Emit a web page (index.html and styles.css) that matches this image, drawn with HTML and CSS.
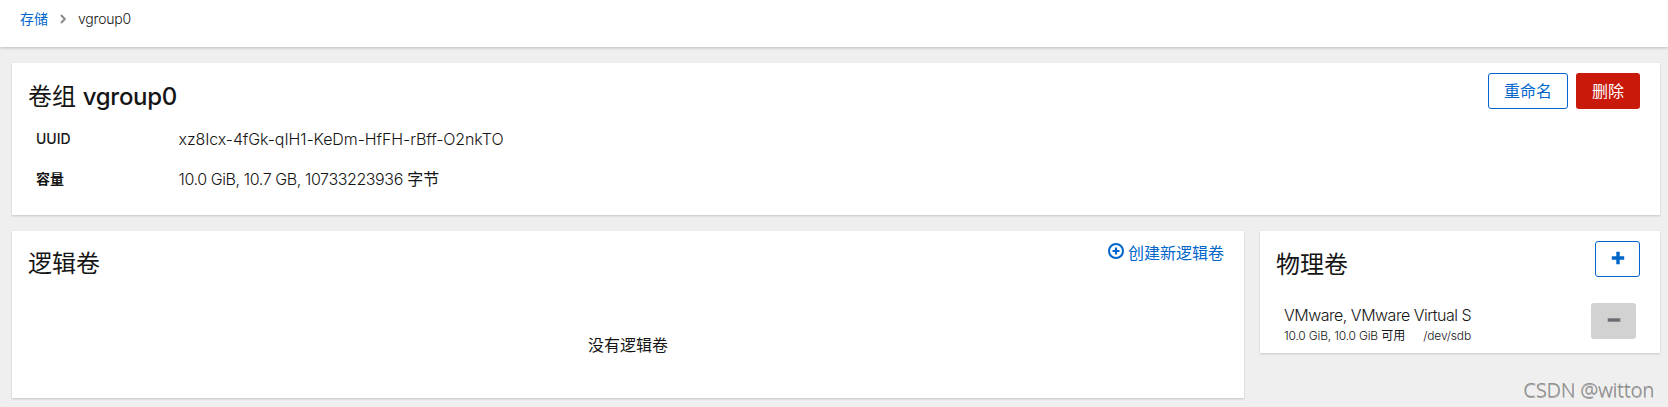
FILE: index.html
```html
<!DOCTYPE html>
<html lang="zh-CN">
<head>
<meta charset="utf-8">
<title>vgroup0</title>
<link rel="stylesheet" href="styles.css">
</head>
<body>
<nav class="breadcrumb">
  <a class="crumb-link">存储</a>
  <svg class="chevron" width="6" height="10" viewBox="0 0 6 10"><path d="M1 1l3.8 4L1 9" fill="none" stroke="#8a8d90" stroke-width="2"/></svg>
  <span class="latin crumb-current">vgroup0</span>
</nav>
<main class="page">
  <section class="card group">
    <header class="card-head">
      <h2 class="title">卷组 <span class="title-name">vgroup0</span></h2>
      <div class="actions"><button class="btn secondary rename">重命名</button><button class="btn danger">删除</button></div>
    </header>
    <dl class="details">
      <dt class="uuid-label">UUID</dt><dd><span class="latin uuid">xz8Icx-4fGk-qIH1-KeDm-HfFH-rBff-O2nkTO</span></dd>
      <dt>容量</dt><dd><span class="latin capacity">10.0 GiB, 10.7 GB, 10733223936</span> 字节</dd>
    </dl>
  </section>
  <div class="columns">
    <section class="card logical">
      <header class="card-head">
        <h2 class="title">逻辑卷</h2>
        <a class="create"><svg width="16" height="16" viewBox="0 0 16 16"><circle cx="8" cy="8" r="7" fill="none" stroke="#06c" stroke-width="2"/><path d="M8 4.5v7M4.5 8h7" stroke="#06c" stroke-width="2.2"/></svg><span>创建新逻辑卷</span></a>
      </header>
      <p class="empty">没有逻辑卷</p>
    </section>
    <section class="card physical">
      <header class="card-head">
        <h2 class="title">物理卷</h2>
        <button class="btn secondary icon"><svg width="14" height="14" viewBox="0 0 14 14"><path d="M7 .8v12.4M.8 7h12.4" stroke="#06c" stroke-width="3.4"/></svg></button>
      </header>
      <div class="volume">
        <div class="volume-text">
          <div class="volume-name"><span class="latin vm">VMware, VMware Virtual S</span></div>
          <div class="volume-meta"><span><span class="latin size">10.0 GiB, 10.0 GiB</span> 可用</span><span class="latin dev">/dev/sdb</span></div>
        </div>
        <button class="btn disabled icon"><svg width="14" height="14" viewBox="0 0 14 14"><path d="M.7 7h12.6" stroke="#6a6e73" stroke-width="3.4"/></svg></button>
      </div>
    </section>
  </div>
</main>
<div class="watermark">CSDN @witton</div>
</body>
</html>
```
FILE: styles.css
```css
* { box-sizing: border-box; }
body {
  margin: 0;
  height: 407px;
  overflow: hidden;
  background: #efefef;
  color: #151515;
  font: 400 16px/24px Inter, "Noto Sans CJK SC", sans-serif;
}
.latin { font-weight: 300; }
.breadcrumb {
  height: 47px;
  padding: 8px 20px;
  display: flex;
  align-items: flex-start;
  background: #fff;
  box-shadow: 0 1px 3px rgba(3, 3, 3, .22);
  font-size: 14px;
  line-height: 22px;
}
.crumb-link, .create { color: #06c; }
.chevron { margin: 6px 12px 0; }
.crumb-current { letter-spacing: -.2px; }
.page { padding: 16px 8px 0 12px; display: flex; flex-direction: column; gap: 16px; }
.card { background: #fff; box-shadow: 0 1px 2px rgba(3, 3, 3, .18); }
.card-head { display: flex; justify-content: space-between; padding: 10px 20px 0 16px; }
.title { margin: 6px 0 -1px; font-size: 24px; line-height: 36px; font-weight: 400; }
.title-name { font-weight: 500; letter-spacing: -.3px; }
.group { height: 152px; }
.actions { display: flex; gap: 8px; }
.btn {
  height: 36px;
  padding: 0 15px 1px;
  border: 1px solid transparent;
  border-radius: 3px;
  font: inherit;
  line-height: 24px;
  display: flex;
  align-items: center;
  justify-content: center;
}
.secondary { background: #fff; border-color: #06c; color: #06c; }
.rename { width: 80px; }
.danger { width: 64px; background: #c9190b; color: #fff; }
.icon { width: 45px; padding: 0; }
.icon svg { margin-bottom: 3px; }
.disabled { background: #d2d2d2; }
.details {
  margin: 0;
  padding: 13px 24px 0;
  display: grid;
  grid-template-columns: 142.5px 1fr;
  row-gap: 16px;
  white-space: nowrap;
}
.details dt { font-size: 14px; font-weight: 600; }
.details .uuid-label { font-weight: 500; }
.details dd { margin: 0; }
.uuid { letter-spacing: -.1px; }
.capacity { letter-spacing: -.4px; }
.columns { display: grid; grid-template-columns: 1232px 400px; gap: 16px; align-items: start; }
.logical { height: 167px; }
.logical .title { margin: 5px 0 0; }
.create { display: flex; gap: 4px; }
.create svg { margin-top: 2px; }
.empty { margin: 51px 0 0; text-align: center; }
.physical { height: 122px; }
.volume { display: flex; justify-content: space-between; padding: 21px 24px 0; }
.vm { letter-spacing: -.49px; }
.volume-meta { display: flex; justify-content: space-between; width: 187px; font-size: 12px; line-height: 18px; white-space: nowrap; }
.size { letter-spacing: -.18px; }
.dev { letter-spacing: -.15px; }
.watermark {
  position: absolute;
  right: 14px;
  bottom: 3px;
  color: #8f8f8f;
  font: 300 20px/28px "Noto Sans", sans-serif;
  letter-spacing: -.1px;
  text-shadow: .5px .5px 0 #aaa, 1px 1px 0 #fff;
}
```
